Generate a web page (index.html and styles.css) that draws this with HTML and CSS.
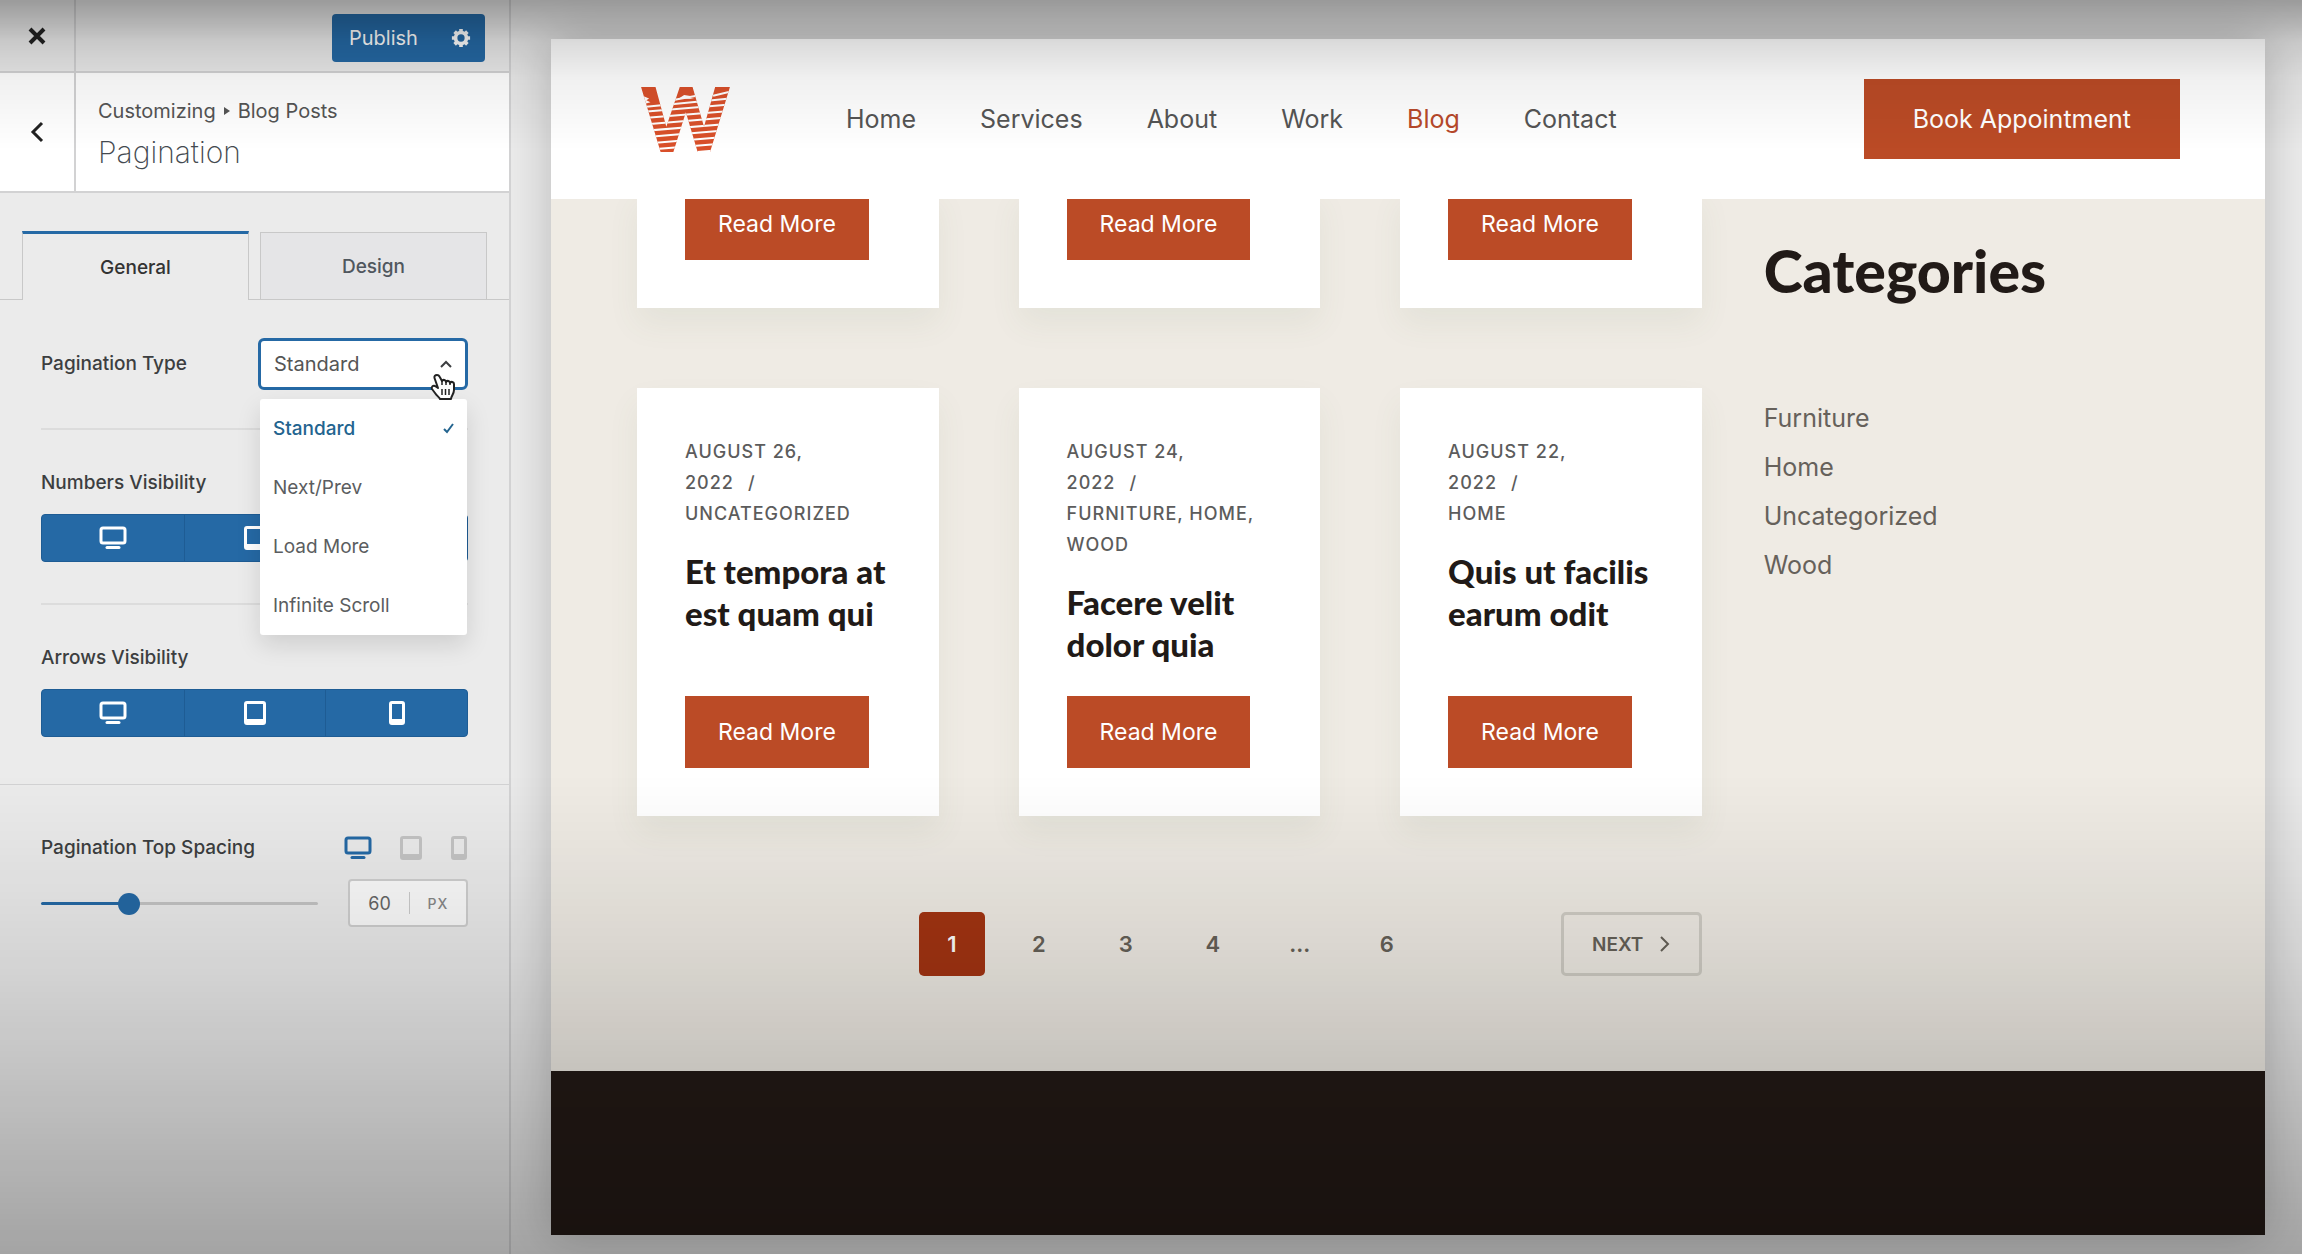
FILE: index.html
```html
<!DOCTYPE html>
<html lang="en">
<head>
<meta charset="utf-8">
<meta name="viewport" content="width=device-width, initial-scale=1">
<title>Customize: Pagination</title>
<link rel="stylesheet" href="styles.css">
</head>
<body>
<svg class="defs" aria-hidden="true">
  <symbol id="desktop" viewBox="0 0 28 24"><rect x="2" y="2" width="24" height="15" rx="2" fill="none" stroke="currentColor" stroke-width="3"/><path d="M8 21.500h12" stroke="currentColor" stroke-width="3" stroke-linecap="round"/></symbol>
  <symbol id="tablet" viewBox="0 0 22 24"><path fill-rule="evenodd" fill="currentColor" d="M3 0h16a3 3 0 0 1 3 3v18a3 3 0 0 1-3 3H3a3 3 0 0 1-3-3V3a3 3 0 0 1 3-3zm0 3v15h16V3z"/></symbol>
  <symbol id="phone" viewBox="0 0 18 24"><path fill-rule="evenodd" fill="currentColor" d="M4 0h10a3 3 0 0 1 3 3v18a3 3 0 0 1-3 3H4a3 3 0 0 1-3-3V3a3 3 0 0 1 3-3zm0 3v15h10V3z"/></symbol>
</svg>

<aside class="panel">
  <header class="panel-bar">
    <button class="bar-close" type="button" aria-label="Close"><svg width="18" height="18" viewBox="0 0 18 18"><path d="M2 2l14 14M16 2L2 16" stroke="currentColor" stroke-width="4"/></svg></button>
    <div class="bar-actions">
      <button class="publish" type="button">Publish
        <svg width="20" height="20" viewBox="0 0 22 22" aria-hidden="true"><path d="M11 1v20M1 11h20M4 4l14 14M18 4L4 18" stroke="currentColor" stroke-width="4"/><circle cx="11" cy="11" r="6" fill="none" stroke="currentColor" stroke-width="4"/><circle class="gear-hole" cx="11" cy="11" r="4"/></svg>
      </button>
    </div>
  </header>
  <div class="panel-title">
    <button class="title-back" type="button" aria-label="Back"><svg width="14" height="22" viewBox="0 0 14 22"><path d="M12 2L3 11l9 9" fill="none" stroke="currentColor" stroke-width="3"/></svg></button>
    <div class="title-text">
      <p class="crumbs">Customizing <svg width="6" height="8" viewBox="0 0 6 8" aria-hidden="true"><path d="M0 0l6 4-6 4z" fill="currentColor"/></svg> Blog Posts</p>
      <h1>Pagination</h1>
    </div>
  </div>

  <div class="tabs" role="tablist">
    <button class="tab tab-active" role="tab" aria-selected="true" type="button">General</button>
    <button class="tab" role="tab" aria-selected="false" type="button">Design</button>
  </div>

  <div class="controls">
    <div class="control control-row">
      <label class="label" for="ptype">Pagination Type</label>
      <div class="select-wrap">
        <select id="ptype" class="select"><option>Standard</option><option>Next/Prev</option><option>Load More</option><option>Infinite Scroll</option></select>
        <svg class="chevron" width="12" height="8" viewBox="0 0 12 8" aria-hidden="true"><path d="M1 7l5-5 5 5" fill="none" stroke="currentColor" stroke-width="2"/></svg>
        <ul class="menu" role="listbox" aria-label="Pagination Type">
          <li class="menu-item selected" role="option" aria-selected="true">Standard <svg width="11" height="11" viewBox="0 0 11 11" aria-hidden="true"><path d="M1 6l3 3 6-8" fill="none" stroke="currentColor" stroke-width="2"/></svg></li>
          <li class="menu-item" role="option">Next/Prev</li>
          <li class="menu-item" role="option">Load More</li>
          <li class="menu-item" role="option">Infinite Scroll</li>
        </ul>
        <svg class="pointer" width="26" height="28" viewBox="0 0 26 28" aria-hidden="true"><path d="M7 2c-2 0-3 1.500-2.500 3L8 15l-3-2c-2-1-4 1-3 3l3 4c2 3 4 4 5 6h11c0-3 3-5 3-9v-6c0-2-3-3-4-1 0-2-3-3-4-1 0-2-3-3-4-1L9.500 3.500C9 2.500 8 2 7 2z" fill="#fff" stroke="#222" stroke-width="2" stroke-linejoin="round"/><path d="M12 16v6M15.500 16v6M19 16v6M12 8v4M16 9v3M20 10v2" stroke="#222" stroke-width="1.500"/></svg>
      </div>
    </div>
    <div class="control">
      <p class="label">Numbers Visibility</p>
      <div class="devices">
        <button type="button" aria-label="Numbers on desktop"><svg width="28" height="24"><use href="#desktop"/></svg></button>
        <button type="button" aria-label="Numbers on tablet"><svg width="22" height="24"><use href="#tablet"/></svg></button>
        <button type="button" aria-label="Numbers on phone"><svg width="18" height="24"><use href="#phone"/></svg></button>
      </div>
    </div>
    <div class="control">
      <p class="label">Arrows Visibility</p>
      <div class="devices">
        <button type="button" aria-label="Arrows on desktop"><svg width="28" height="24"><use href="#desktop"/></svg></button>
        <button type="button" aria-label="Arrows on tablet"><svg width="22" height="24"><use href="#tablet"/></svg></button>
        <button type="button" aria-label="Arrows on phone"><svg width="18" height="24"><use href="#phone"/></svg></button>
      </div>
    </div>
  </div>

  <div class="spacing">
    <div class="spacing-head">
      <label class="label" for="space">Pagination Top Spacing</label>
      <div class="device-tabs">
        <button class="on" type="button" aria-label="Desktop"><svg width="28" height="24"><use href="#desktop"/></svg></button>
        <button type="button" aria-label="Tablet"><svg width="22" height="24"><use href="#tablet"/></svg></button>
        <button type="button" aria-label="Phone"><svg width="18" height="24"><use href="#phone"/></svg></button>
      </div>
    </div>
    <div class="spacing-body">
      <input id="space" class="range" type="range" min="0" max="200" value="60">
      <div class="unit-box">
        <input type="text" value="60" aria-label="Spacing value">
        <button type="button">PX</button>
      </div>
    </div>
  </div>
</aside>

<div class="preview">
  <div class="site">
    <header class="site-header">
      <a class="logo" href="#" aria-label="Home page">
        <svg width="89" height="65" viewBox="0 0 264 193">
          <clipPath id="w"><path d="M0 0H43L75 118 115 0H153L187 118 220 0H264L205 193H168L133 75 96 193H58z"/></clipPath>
          <g clip-path="url(#w)">
            <path fill="#d9502a" d="M0 0h264v193H0z"/>
            <path stroke="#fff" stroke-width="6" fill="none" d="M0 60L264 34M0 74L264 52M0 93L264 71M0 112L264 90M0 131L264 109M0 150L264 128M0 169L264 147M0 188L264 166M0 207L264 185M214 26L264 14M100 38L165 26"/>
            <path fill="#fff" d="M4 26l20 8-8 5 12 6-20 6zM112 34l16-10 28 4-16 3 18 5z"/>
          </g>
        </svg>
      </a>
      <nav class="nav">
        <a href="#">Home</a><a href="#">Services</a><a href="#">About</a><a href="#">Work</a><a class="current" href="#">Blog</a><a href="#">Contact</a>
      </nav>
      <a class="btn btn-book" href="#">Book Appointment</a>
    </header>

    <div class="content">
      <main class="posts">
        <div class="cards">
          <article class="card card-cut"><a class="btn" href="#">Read More</a></article>
          <article class="card card-cut"><a class="btn" href="#">Read More</a></article>
          <article class="card card-cut"><a class="btn" href="#">Read More</a></article>
          <article class="card">
            <p class="meta">August 26,<br>2022<span class="slash">/</span><br>Uncategorized</p>
            <h2>Et tempora at est quam qui</h2>
            <a class="btn" href="#">Read More</a>
          </article>
          <article class="card">
            <p class="meta">August 24,<br>2022<span class="slash">/</span><br>Furniture, Home, Wood</p>
            <h2>Facere velit dolor quia</h2>
            <a class="btn" href="#">Read More</a>
          </article>
          <article class="card">
            <p class="meta">August 22,<br>2022<span class="slash">/</span><br>Home</p>
            <h2>Quis ut facilis earum odit</h2>
            <a class="btn" href="#">Read More</a>
          </article>
        </div>
        <nav class="pager" aria-label="Posts">
          <div class="pages"><a class="here" href="#">1</a><a href="#">2</a><a href="#">3</a><a href="#">4</a><span>...</span><a href="#">6</a></div>
          <a class="next" href="#">Next <svg width="11" height="16" viewBox="0 0 11 16" aria-hidden="true"><path d="M2 1l7 7-7 7" fill="none" stroke="currentColor" stroke-width="2"/></svg></a>
        </nav>
      </main>
      <aside class="categories">
        <h2>Categories</h2>
        <ul>
          <li><a href="#">Furniture</a></li>
          <li><a href="#">Home</a></li>
          <li><a href="#">Uncategorized</a></li>
          <li><a href="#">Wood</a></li>
        </ul>
      </aside>
    </div>
    <footer class="site-footer"></footer>
  </div>
</div>
</body>
</html>
```
FILE: styles.css
```css
:root {
  --blue: #2569a5;
  --rust: #bb4b26;
  --line: #d2d2d3;
  --panel: #ebebeb;
}

* { box-sizing: border-box; }

body {
  margin: 0;
  min-height: 100vh;
  display: flex;
  background: var(--panel);
  font-family: Inter, "Liberation Sans", sans-serif;
  color: #3c3e40;
}

/* shade along the top and bottom edges of the window */
body::after {
  content: "";
  position: fixed;
  inset: 0;
  pointer-events: none;
  z-index: 10;
  background:
    linear-gradient(to bottom, rgba(0,0,0,.34), rgba(0,0,0,.23) 24px, rgba(0,0,0,.14) 42px, rgba(0,0,0,.06) 78px, rgba(0,0,0,0) 150px),
    linear-gradient(to top, rgba(0,0,0,.3), rgba(0,0,0,.17) 182px, rgba(0,0,0,.09) 300px, rgba(0,0,0,.03) 410px, rgba(0,0,0,0) 480px);
}

button, input, select { font: inherit; color: inherit; }
button { border: 0; background: none; padding: 0; }
a { color: inherit; text-decoration: none; }
h1, h2, p, ul { margin: 0; padding: 0; }
ul { list-style: none; }
svg { display: block; }
.defs { position: absolute; width: 0; height: 0; }

/* customizer panel */
.panel {
  flex: none;
  width: 511px;
  border-right: 2px solid var(--line);
}

.panel-bar, .panel-title {
  display: grid;
  grid-template-columns: 76px 1fr;
  border-bottom: 2px solid var(--line);
}
.panel-bar { height: 73px; }
.panel-title { height: 120px; background: #fff; }

.bar-close, .title-back {
  display: flex;
  align-items: center;
  justify-content: center;
  border-right: 2px solid var(--line);
  color: #222;
}

.bar-actions {
  display: flex;
  align-items: center;
  justify-content: flex-end;
  padding: 4px 24px 0 0;
}
.publish {
  display: flex;
  align-items: center;
  justify-content: space-between;
  width: 153px;
  height: 48px;
  padding: 0 14px 0 17px;
  border-radius: 4px;
  background: var(--blue);
  color: #fff;
  font-size: 20px;
}
.gear-hole { fill: var(--blue); }

.title-text { padding: 22px 22px 0; }
.crumbs {
  display: flex;
  align-items: center;
  gap: 8px;
  font-size: 20px;
  line-height: 32px;
  color: #555;
}
.title-text h1 {
  font-size: 30px;
  line-height: 50px;
  font-weight: 200;
  color: #444a50;
}

.tabs {
  display: flex;
  align-items: flex-end;
  gap: 11px;
  height: 107px;
  padding: 0 22px;
  border-bottom: 1px solid #c8c8c8;
}
.tab {
  flex: 1;
  height: 67px;
  border: 1px solid #c8c8c8;
  border-bottom: 0;
  background: #e5e5e7;
  font-size: 19px;
  font-weight: 500;
  color: #50575e;
}
.tab-active {
  height: 69px;
  margin-bottom: -1px;
  border-top: 3px solid var(--blue);
  background: var(--panel);
  color: #333;
}

.controls {
  padding: 0 41px 47px;
  border-bottom: 1px solid var(--line);
}
.control { padding: 41px 0; border-top: 2px solid #dcdcdc; }
.control:first-child { padding: 38px 0; border-top: 0; }
.control:last-child { padding-bottom: 0; }
.control-row, .spacing-head {
  display: flex;
  align-items: center;
  justify-content: space-between;
}
.label {
  font-size: 19px;
  line-height: 24px;
  font-weight: 500;
}

.select-wrap { position: relative; width: 210px; }
.select {
  display: block;
  appearance: none;
  width: 100%;
  height: 52px;
  padding: 0 13px;
  border: 3px solid var(--blue);
  border-radius: 6px;
  background: #fff;
  color: #555;
  font-size: 20px;
}
.chevron { position: absolute; right: 16px; top: 22px; }
.menu {
  position: absolute;
  z-index: 2;
  top: 61px;
  left: 2px;
  right: 1px;
  border-radius: 3px;
  background: #fff;
  box-shadow: 0 10px 24px rgba(0,0,0,.12);
}
.menu-item {
  display: flex;
  align-items: center;
  justify-content: space-between;
  height: 59px;
  padding: 0 13px;
  font-size: 19px;
  color: #5b5d60;
}
.menu-item.selected { color: #23648f; font-weight: 500; }
.pointer { position: absolute; z-index: 3; right: 12px; top: 35px; }

.devices {
  display: grid;
  grid-template-columns: repeat(3, 1fr);
  height: 48px;
  margin-top: 19px;
  border: 1px solid #1e5c94;
  border-radius: 4px;
  background: var(--blue);
  color: #fff;
}
.devices button { display: grid; place-items: center; }
.devices button + button { border-left: 1px solid #1e5c94; }

.spacing { padding: 51px 41px 0; }
.device-tabs { display: flex; gap: 28px; color: #c4c4c4; }
.device-tabs .on { color: var(--blue); }
.spacing-body {
  display: flex;
  align-items: center;
  justify-content: space-between;
  margin-top: 19px;
}

.range {
  appearance: none;
  width: 277px;
  height: 24px;
  margin: 0;
  background: none;
}
.range::-webkit-slider-runnable-track {
  height: 3px;
  border-radius: 2px;
  background: linear-gradient(to right, var(--blue) 32%, #c4c4c4 32%);
}
.range::-webkit-slider-thumb {
  appearance: none;
  width: 22px;
  height: 22px;
  margin-top: -9px;
  border-radius: 50%;
  background: var(--blue);
}
.unit-box {
  display: flex;
  align-items: center;
  width: 120px;
  height: 48px;
  border: 2px solid #cfcfcf;
  border-radius: 4px;
  background: #fbfbfb;
  color: #666;
}
.unit-box input {
  width: 60px;
  height: 22px;
  padding: 0;
  border: 0;
  border-right: 1px solid #ccc;
  background: none;
  text-align: center;
  font-size: 18px;
}
.unit-box button { flex: 1; font-size: 14px; font-weight: 500; letter-spacing: 1px; color: #888; }

/* site preview */
.preview {
  flex: 1;
  display: flex;
  padding: 39px 37px 19px 40px;
  overflow: hidden;
}
.site {
  flex: 1;
  display: flex;
  flex-direction: column;
  background: #efebe4;
  box-shadow: 0 0 44px rgba(0,0,0,.22);
}
.site-header {
  position: relative;
  z-index: 1;
  display: flex;
  align-items: center;
  height: 160px;
  padding: 0 85px 0 90px;
  background: #fff;
}
.nav {
  display: flex;
  gap: 64px;
  margin: 0 auto 0 116px;
  font-size: 25px;
  color: #555;
}
.nav .current { color: #b84a2c; }

.btn {
  display: flex;
  align-items: center;
  justify-content: center;
  align-self: flex-start;
  height: 72px;
  padding: 0 33px;
  background: var(--rust);
  color: #fff;
  font-size: 23px;
  white-space: nowrap;
}
.btn-book { align-self: center; height: 80px; padding: 0 49px; font-size: 25px; }

.content {
  display: grid;
  grid-template-columns: 69% 1fr;
  gap: 62px;
  padding: 0 85px 95px 86px;
}
.cards {
  display: grid;
  grid-template-columns: repeat(3, 1fr);
  gap: 80px;
  margin-top: -11px;
}
.card {
  display: flex;
  flex-direction: column;
  padding: 48px;
  background: #fff;
  box-shadow: 0 16px 30px rgba(90,110,70,.07);
}
.card-cut { padding-top: 0; }
.meta {
  font-size: 18px;
  line-height: 31px;
  font-weight: 500;
  letter-spacing: 1px;
  text-transform: uppercase;
  color: #5c5c5c;
}
.slash { margin-left: 14px; }
.card h2, .categories h2 {
  font-family: Lato, "Liberation Sans", sans-serif;
  font-weight: 900;
  color: #211a17;
}
.card h2 {
  margin: 21px 0 31px;
  font-size: 33px;
  line-height: 42px;
}
.card .btn { margin-top: auto; }

.pager {
  display: grid;
  grid-template-columns: 1fr auto 1fr;
  margin-top: 96px;
  font-weight: 600;
  color: #666158;
}
.pages { grid-column: 2; display: flex; gap: 21px; font-size: 22px; }
.pages > * { display: grid; place-items: center; width: 66px; height: 64px; border-radius: 5px; }
.pages .here { background: #a33412; color: #fff; }
.next {
  justify-self: end;
  display: flex;
  align-items: center;
  justify-content: center;
  gap: 16px;
  width: 141px;
  height: 64px;
  border: 3px solid #d0cdc5;
  border-radius: 5px;
  font-size: 19px;
  text-transform: uppercase;
}

.categories { padding-top: 36px; }
.categories h2 { font-size: 59px; line-height: 72px; }
.categories ul { margin-top: 87px; }
.categories li { font-size: 25px; line-height: 49px; color: #66615b; }

.site-footer { flex: 1; min-height: 160px; background: #241a16; }
```
